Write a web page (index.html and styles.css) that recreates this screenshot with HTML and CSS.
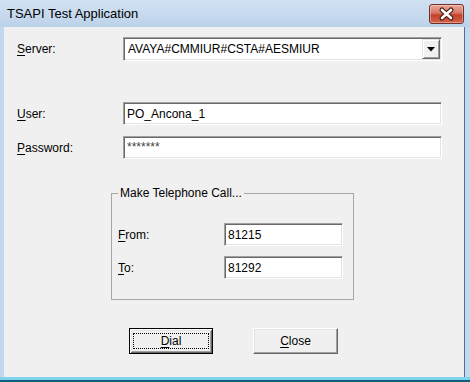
FILE: index.html
```html
<!DOCTYPE html>
<html lang="en">
<head>
  <meta charset="UTF-8" />
  <title>TSAPI Test Application</title>
  <link rel="stylesheet" href="styles.css">
</head>
<body>
  <div class="window">
    <div class="titlebar">
      <span class="title">TSAPI Test Application</span>
      <button class="btn-x" title="Close">
        <svg width="35" height="20" viewBox="0 0 35 20">
          <path d="M13 6 L22 14 M22 6 L13 14" stroke="#4a1d16" stroke-width="5" stroke-linecap="round" fill="none"/>
          <path d="M13 6 L22 14 M22 6 L13 14" stroke="#fff" stroke-width="2.6" stroke-linecap="round" fill="none"/>
        </svg>
      </button>
    </div>

    <div class="frame">
      <div class="client">
        <div class="field">
          <label><u>S</u>erver:</label>
          <div class="combo sunken">
            <span>AVAYA#CMMIUR#CSTA#AESMIUR</span>
            <span class="drop">
              <svg width="8" height="5" viewBox="0 0 8 5"><path d="M0 0 H8 L4 4.5 Z" fill="#000"/></svg>
            </span>
          </div>
        </div>

        <div class="field field-user">
          <label><u>U</u>ser:</label>
          <input class="edit sunken" type="text" value="PO_Ancona_1" readonly>
        </div>

        <div class="field field-pass">
          <label><u>P</u>assword:</label>
          <input class="edit sunken pass" type="text" value="*******" readonly>
        </div>

        <fieldset class="group">
          <legend>Make Telephone Call...</legend>
          <div class="field field-from">
            <label><u>F</u>rom:</label>
            <input class="edit small sunken" type="text" value="81215" readonly>
          </div>
          <div class="field field-to">
            <label><u>T</u>o:</label>
            <input class="edit small sunken" type="text" value="81292" readonly>
          </div>
        </fieldset>

        <div class="buttons">
          <button class="btn btn-default"><span class="focus"><u>D</u>ial</span></button>
          <button class="btn"><u>C</u>lose</button>
        </div>
      </div>
      <div class="edge"></div>
    </div>
  </div>
</body>
</html>
```

FILE: styles.css
```css
* { box-sizing: border-box; }
body {
  margin: 0;
  background: #0f6079;
  font-family: 'Liberation Sans', Arial, sans-serif;
  font-size: 12px;
  color: #000;
}
u { text-decoration-thickness: 1px; text-underline-offset: 2px; }

.window {
  width: 470px;
  height: 380px;
  background: #c3d7ed;
  border-bottom: 3px solid #7fd3ee;
}

.titlebar {
  height: 27px;
  display: flex;
  align-items: center;
  justify-content: space-between;
  padding: 0 6px 0 7px;
  background: linear-gradient(#d2e1f2, #bcd2ea);
}
.title {
  font-size: 13px;
  color: #000;
}
.btn-x {
  width: 35px;
  height: 20px;
  padding: 0;
  border: 1px solid #6e3026;
  border-radius: 3px;
  background: linear-gradient(#e9a899 0%, #d77563 45%, #c2412d 55%, #d4624a 100%);
  box-shadow: inset 0 0 0 1px rgba(255,255,255,0.35);
}
.btn-x svg { display: block; margin: -1px; }

.frame {
  display: flex;
  height: 350px;
}
.client {
  margin-left: 4px;
  width: 460px;
  background: #f0f0f0;
  padding: 10px 0 0 13px;
}
.edge {
  width: 1px;
  background: #4f7197;
}

.field {
  display: flex;
  align-items: center;
}
.field label {
  width: 106px;
}
.field-user { margin-top: 41px; }
.field-pass { margin-top: 11px; }

.sunken {
  background: #fff;
  border: 1px solid;
  border-color: #a0a0a0 #fff #fff #a0a0a0;
  box-shadow: inset 1px 1px #696969, inset -1px -1px #e3e3e3;
}

.combo {
  width: 319px;
  height: 24px;
  display: flex;
  align-items: center;
  justify-content: space-between;
  padding: 1px 1px 1px 4px;
}
.drop {
  width: 18px;
  height: 20px;
  display: flex;
  align-items: center;
  justify-content: center;
  background: #f0f0f0;
  border: 1px solid;
  border-color: #e3e3e3 #696969 #696969 #e3e3e3;
  box-shadow: inset 1px 1px #fff, inset -1px -1px #a0a0a0;
}

.edit {
  width: 319px;
  height: 23px;
  padding: 0 3px;
  font: inherit;
  color: #000;
  outline: none;
}
.edit.pass {
  padding-bottom: 2px;
  color: #444;
}
.edit.small { width: 119px; }

.group {
  margin: 27px 0 0 94px;
  width: 243px;
  height: 114px;
  padding: 0 0 0 6px;
  border: 1px solid #a6a6a6;
}
.group legend {
  padding: 0 2px;
  line-height: 14px;
}
.field-from { margin-top: 23px; }
.field-to { margin-top: 10px; }

.buttons {
  display: flex;
  gap: 40px;
  margin: 28px 0 0 112px;
}
.btn {
  width: 85px;
  height: 26px;
  padding: 0;
  font: inherit;
  color: #000;
  background: #f0f0f0;
  border: 1px solid;
  border-color: #fff #696969 #696969 #fff;
  box-shadow: inset -1px -1px #a0a0a0, inset 1px 1px #e3e3e3;
}
.btn-default {
  width: 84px;
  border: 1px solid #000;
  box-shadow: inset 1px 1px #fff, inset -1px -1px #696969, inset 2px 2px #e3e3e3, inset -2px -2px #a0a0a0;
}
.btn-default .focus {
  display: block;
  height: 16px;
  line-height: 14px;
  margin: 0 3px;
  border: 1px dotted #000;
}
```
